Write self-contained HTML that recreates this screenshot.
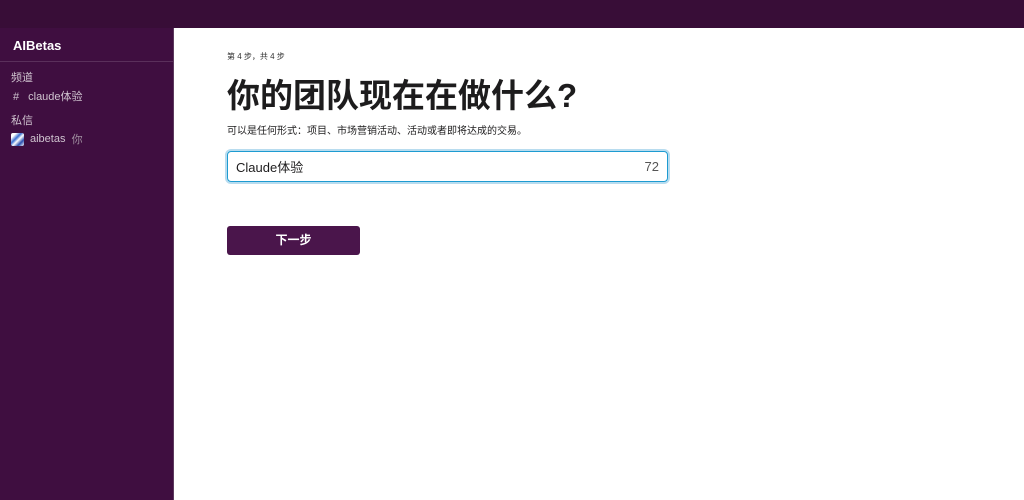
<!DOCTYPE html>
<html><head><meta charset="utf-8"><style>
*{margin:0;padding:0;box-sizing:border-box}
body{width:1024px;height:500px;overflow:hidden;background:#fff;font-family:"Liberation Sans","Noto Sans CJK SC",sans-serif;position:relative}
.top{position:absolute;left:0;top:0;width:1024px;height:28px;background:#380d37}
.side{position:absolute;left:0;top:28px;width:174px;height:472px;background:#3f0e40;border-right:1px solid #5c3a5d;color:#cfc3cf}
.ws{height:34px;border-bottom:1px solid #5a2f5b;color:#fff;font-weight:bold;font-size:13px;padding:10px 0 0 13px}
.sec{font-size:11px;position:absolute;left:11px}
.main{position:absolute;left:227px}
</style></head><body>
<div class="top"></div>
<div class="side">
<div class="ws">AIBetas</div>
<div class="sec" style="top:41px">频道</div>
<div class="sec" style="top:60px;left:13px"><span style="margin-right:9px">#</span>claude体验</div>
<div class="sec" style="top:84px">私信</div>
<div class="sec" style="top:103px;left:11px;display:flex;align-items:center"><span style="display:inline-block;width:13px;height:13px;background:linear-gradient(135deg,#fff 20%,#3a6fd0 40%,#fff 55%,#2a4fb0 75%,#fff);border-radius:2px;margin-right:6px"></span>aibetas&nbsp;&nbsp;<span style="color:#a08fa0">你</span></div>
</div>
<div class="main" style="top:51px;font-size:8px;color:#333">第 4 步，共 4 步</div>
<div class="main" style="top:74px;font-size:33px;font-weight:bold;color:#1d1c1d;line-height:44px">你的团队现在在做什么?</div>
<div class="main" style="top:122px;font-size:10px;color:#1d1c1d">可以是任何形式：项目、市场营销活动、活动或者即将达成的交易。</div>
<div class="main" style="top:151px;width:441px;height:31px;border:1px solid #1d9bd1;box-shadow:0 0 0 2px #b8dcef;border-radius:4px;font-size:13px;color:#1d1c1d;padding:0 8px;display:flex;align-items:center;justify-content:space-between"><span>Claude体验</span><span style="color:#555">72</span></div>
<div class="main" style="top:226px;width:133px;height:29px;background:#4a154b;border-radius:3px;color:#fff;font-size:12px;font-weight:bold;text-align:center;line-height:29px">下一步</div>
</body></html>
